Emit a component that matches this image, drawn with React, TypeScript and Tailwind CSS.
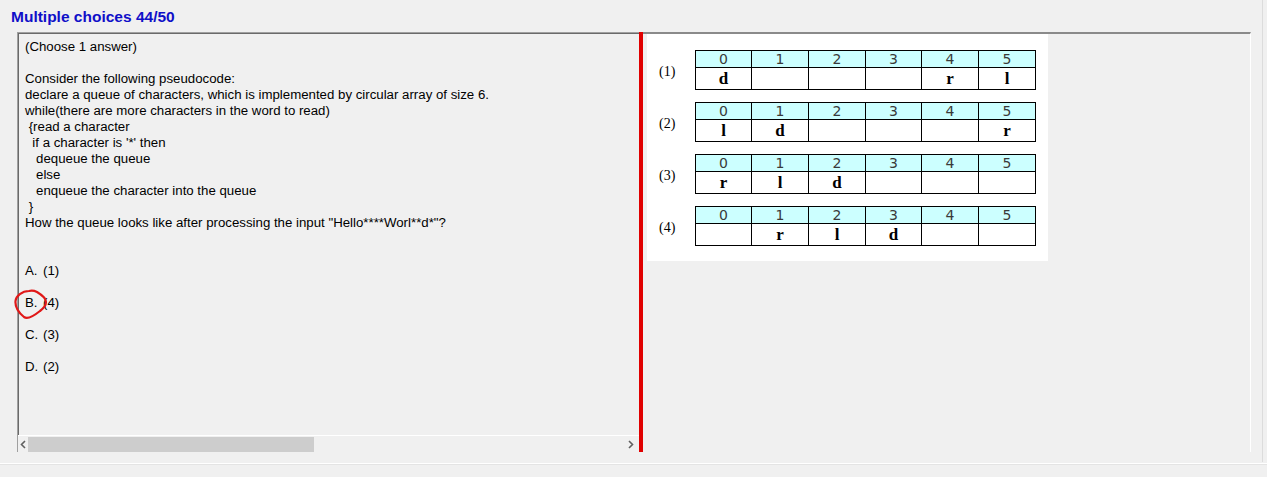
import React from 'react';

const QUESTION_LINES = [
  '(Choose 1 answer)',
  '',
  'Consider the following pseudocode:',
  'declare a queue of characters, which is implemented by circular array of size 6.',
  'while(there are more characters in the word to read)',
  '\u00a0{read a character',
  '\u00a0\u00a0if a character is \'*\' then',
  '\u00a0\u00a0\u00a0dequeue the queue',
  '\u00a0\u00a0\u00a0else',
  '\u00a0\u00a0\u00a0enqueue the character into the queue',
  '\u00a0}',
  'How the queue looks like after processing the input "Hello****Worl**d*"?',
];

const ANSWERS = [
  { key: 'A.', text: '(1)' },
  { key: 'B.', text: '(4)' },
  { key: 'C.', text: '(3)' },
  { key: 'D.', text: '(2)' },
];

const QUEUES: string[][] = [
  ['d', '', '', '', 'r', 'l'],
  ['l', 'd', '', '', '', 'r'],
  ['r', 'l', 'd', '', '', ''],
  ['', 'r', 'l', 'd', '', ''],
];

function QueueTable({ cells }: { cells: string[] }) {
  return (
    <div className="grid grid-cols-[56px_57px_57px_56px_57px_57px] border-t border-l border-black w-[341px]">
      {cells.map((_, i) => (
        <div
          key={`h${i}`}
          className="h-[17px] bg-[#ccffff] border-r border-b border-black text-center text-[14px] leading-[16px] text-[#3a3a3a] font-['DejaVu_Sans',sans-serif] font-normal"
        >
          {i}
        </div>
      ))}
      {cells.map((c, i) => (
        <div
          key={`v${i}`}
          className="h-[22px] bg-white border-r border-b border-black text-center text-[17px] leading-[21px] font-bold text-black font-['Liberation_Serif',serif]"
        >
          {c}
        </div>
      ))}
    </div>
  );
}

function QueueImage() {
  return (
    <div className="w-[401px] h-[227px] bg-white pt-[16px] flex flex-col gap-[12px]">
      {QUEUES.map((q, i) => (
        <div key={i} className="flex items-center">
          <div className="w-[48px] pl-[12px] pt-[3px] text-[14px] text-black font-['Liberation_Serif',serif]">({i + 1})</div>
          <QueueTable cells={q} />
        </div>
      ))}
    </div>
  );
}

function ScrollBar() {
  return (
    <div className="h-[17px] flex items-center bg-[#f0f0f0] border-t border-white">
      <div className="w-[10px] flex justify-center">
        <svg width="6" height="9" viewBox="0 0 6 9">
          <path d="M5 1 L1.5 4.5 L5 8" stroke="#606060" strokeWidth="1.6" fill="none" />
        </svg>
      </div>
      <div className="w-[286px] h-[15px] bg-[#cdcdcd]" />
      <div className="flex-1" />
      <div className="w-[17px] flex justify-center">
        <svg width="6" height="9" viewBox="0 0 6 9">
          <path d="M1 1 L4.5 4.5 L1 8" stroke="#606060" strokeWidth="1.6" fill="none" />
        </svg>
      </div>
    </div>
  );
}

export default function App() {
  return (
    <div className="w-[1267px] h-[477px] bg-[#f0f0f0] overflow-hidden flex flex-col font-['Liberation_Sans',Arial,sans-serif]">
      <div className="h-[32px] pl-[11px] pt-[8px] text-[15.5px] leading-[18px] font-bold text-[#0f0fc8]">
        Multiple choices 44/50
      </div>

      <div className="flex h-[420px]">
        <div className="w-[17px]" />
        {/* question pane */}
        <div className="relative w-[622px] flex flex-col border-t border-l border-[#a0a0a0] shadow-[inset_1px_1px_0_#6a6a6a]">
          <div className="flex-1 pl-[7px] pt-[6px] text-[13.25px] leading-[16px] text-black">
            {QUESTION_LINES.map((l, i) => (
              <div key={i} className="h-[16px] whitespace-pre">{l}</div>
            ))}
            <div className="mt-[32px] flex flex-col gap-[16px]">
              {ANSWERS.map((a) => (
                <div key={a.key} className="h-[16px] flex">
                  <span className="w-[18px]">{a.key}</span>
                  <span>{a.text}</span>
                </div>
              ))}
            </div>
          </div>
          <ScrollBar />
          {/* hand-drawn mark around answer B */}
          <svg className="absolute left-[-4px] top-[256px]" width="36" height="32" viewBox="0 0 36 32">
            <path
              d="M15 2 C8 2 2 7 1.5 12 C1 18 5 24 10 28 C14 31 21 26 26 22 C30 19 32 15 32 13 C32 9 28 6 23 3 C20 1.5 17 1.5 15 2 Z"
              stroke="#e01818"
              strokeWidth="2.2"
              fill="none"
            />
          </svg>
        </div>
        {/* splitter */}
        <div className="w-[4px] bg-[#e00000]" />
        {/* image pane */}
        <div className="w-[608px] border-t-2 border-[#8a8a8a] pl-[4px] border-r border-r-white">
          <QueueImage />
        </div>
        <div className="w-[11px]" />
        <div className="w-[1px] bg-[#dcdcdc] mt-[-32px] h-[462px]" />
      </div>

      <div className="mt-[11px] border-t border-white h-[1px]" />
      <div className="flex-1 border-t border-[#e4e4e4]" />
    </div>
  );
}
